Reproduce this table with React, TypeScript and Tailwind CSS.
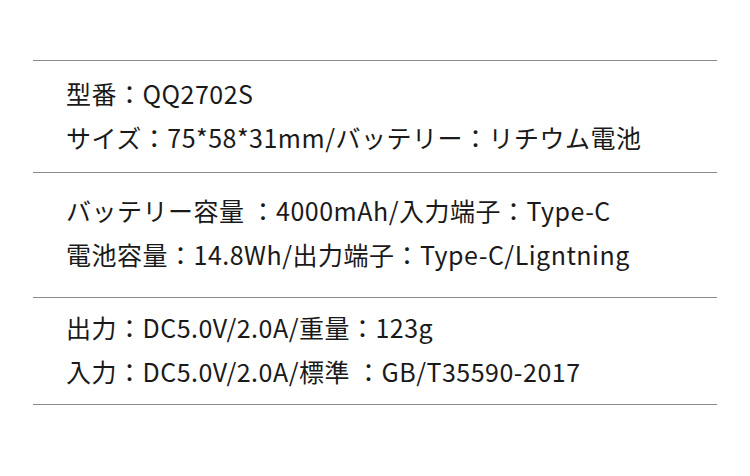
const sections = [
  {
    pad: "h-[112px] pt-[10px]",
    rows: ["型番：QQ2702S", "サイズ：75*58*31mm/バッテリー：リチウム電池"],
  },
  {
    pad: "h-[125px] pt-[15px]",
    rows: ["バッテリー容量 ：4000mAh/入力端子：Type-C", "電池容量：14.8Wh/出力端子：Type-C/Ligntning"],
  },
  {
    pad: "h-[107px] pt-[7px]",
    rows: ["出力：DC5.0V/2.0A/重量：123g", "入力：DC5.0V/2.0A/標準 ：GB/T35590-2017"],
  },
]

export default function App() {
  return (
    <div
      className="w-[750px] h-[476px] bg-white pt-[60px] px-[33px] text-[#1a1a1a]"
      style={{ fontFamily: '"Noto Sans CJK JP", "Noto Sans", sans-serif' }}
    >
      {sections.map((s, i) => (
        <div key={i} className={`border-t border-[#8a8a8a] ${s.pad}`}>
          {s.rows.map((r) => (
            <div key={r} className="pl-[33px] h-[44px] leading-[44px] text-[25px] tracking-[0.5px] whitespace-nowrap">
              {r}
            </div>
          ))}
        </div>
      ))}
      <div className="border-t border-[#8a8a8a]" />
    </div>
  )
}
